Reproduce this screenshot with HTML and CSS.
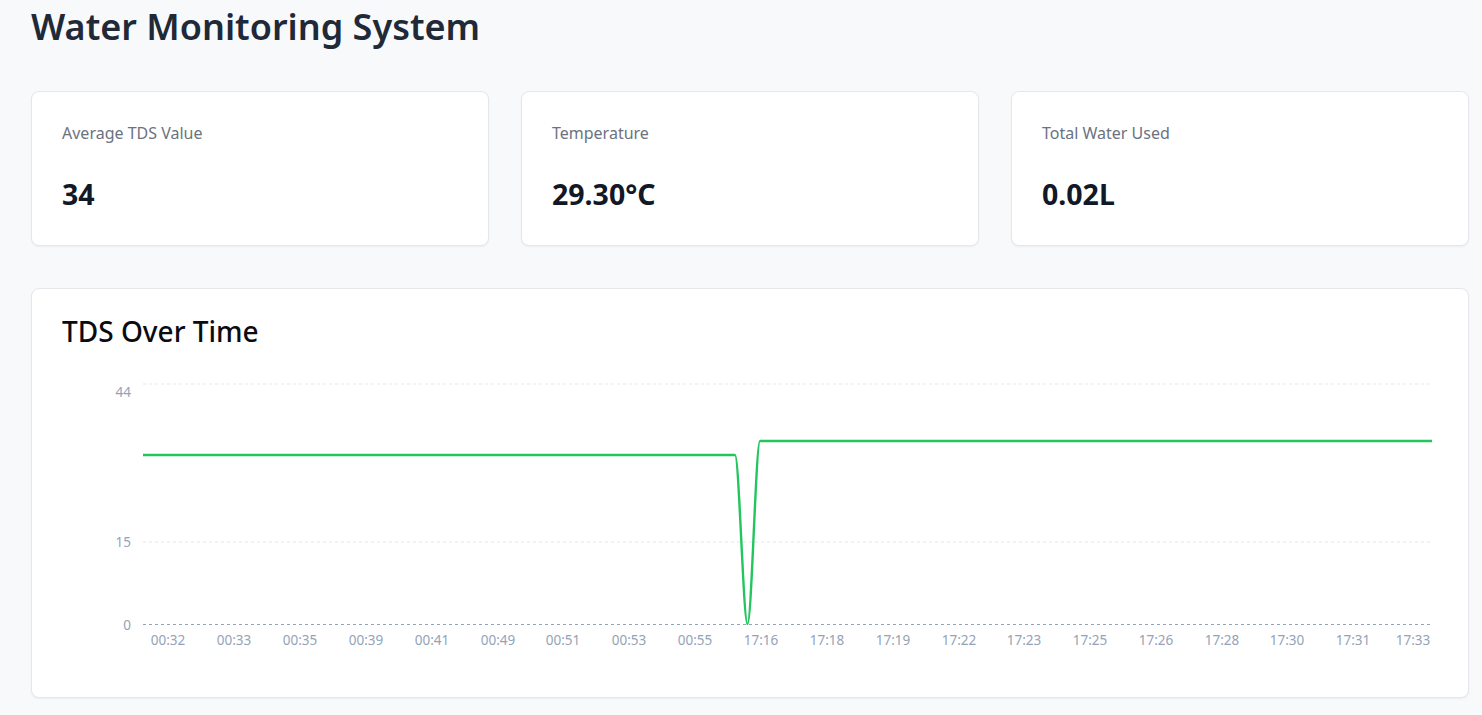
FILE: index.html
```html
<!DOCTYPE html>
<html lang="en">
<head>
<meta charset="utf-8">
<title>Water Monitoring System</title>
<link rel="stylesheet" href="styles.css">
</head>
<body>
<main class="page">
  <h1 class="page-title">Water Monitoring System</h1>
  <section class="stats">
    <div class="card stat">
      <div class="stat-label">Average TDS Value</div>
      <div class="stat-value">34</div>
    </div>
    <div class="card stat">
      <div class="stat-label">Temperature</div>
      <div class="stat-value">29.30°C</div>
    </div>
    <div class="card stat">
      <div class="stat-label">Total Water Used</div>
      <div class="stat-value">0.02L</div>
    </div>
  </section>
  <section class="card chart-card">
    <h2 class="chart-title">TDS Over Time</h2>
    <svg class="chart" width="1376" height="310" viewBox="0 0 1376 310">
      <g class="grid">
        <line x1="81" y1="25" x2="1368" y2="25"/>
        <line x1="81" y1="183" x2="1368" y2="183"/>
      </g>
      <line class="axis" x1="81" y1="265.5" x2="1370" y2="265.5"/>
      <g class="ylabels">
        <text x="69" y="34">44</text>
        <text x="69" y="184">15</text>
        <text x="69" y="267">0</text>
      </g>
      <g class="xlabels">
        <text x="106" y="282">00:32</text>
        <text x="172" y="282">00:33</text>
        <text x="238" y="282">00:35</text>
        <text x="304" y="282">00:39</text>
        <text x="370" y="282">00:41</text>
        <text x="436" y="282">00:49</text>
        <text x="501" y="282">00:51</text>
        <text x="567" y="282">00:53</text>
        <text x="633" y="282">00:55</text>
        <text x="699" y="282">17:16</text>
        <text x="765" y="282">17:18</text>
        <text x="831" y="282">17:19</text>
        <text x="897" y="282">17:22</text>
        <text x="962" y="282">17:23</text>
        <text x="1028" y="282">17:25</text>
        <text x="1094" y="282">17:26</text>
        <text x="1160" y="282">17:28</text>
        <text x="1225" y="282">17:30</text>
        <text x="1291" y="282">17:31</text>
        <text x="1351" y="282">17:33</text>
      </g>
      <path class="series" d="M81 96 H673 C677.2 96 681.3 265 685.5 265 C689.7 265 693.8 82 698 82 H1370"/>
    </svg>
  </section>
</main>
</body>
</html>
```

FILE: styles.css
```css
html, body {
  margin: 0;
  padding: 0;
  background: #f8f9fb;
}

body {
  font-family: "Noto Sans", "Open Sans", sans-serif;
  color: #1f2937;
}

.page {
  padding: 7px 13px 16px 31px;
}

.page-title {
  margin: 0 0 44px;
  font-size: 36px;
  line-height: 40px;
  font-weight: 600;
  color: #1f2937;
}

.stats {
  display: grid;
  grid-template-columns: repeat(3, 1fr);
  gap: 32px;
  margin-bottom: 42px;
}

.card {
  background: #ffffff;
  border: 1px solid #e5e7eb;
  border-radius: 8px;
  box-shadow: 0 1px 2px rgba(15, 23, 42, 0.05);
}

.stat {
  padding: 29px 30px 30px;
  height: 155px;
  box-sizing: border-box;
}

.stat-label {
  font-size: 16px;
  line-height: 24px;
  color: #6b7280;
  margin-bottom: 31px;
}

.stat-value {
  font-size: 28.5px;
  line-height: 36px;
  font-weight: 700;
  color: #111827;
}

.chart-card {
  padding: 24px 30px 28px;
  height: 410px;
  box-sizing: border-box;
}

.chart-title {
  margin: 0 0 10px;
  font-size: 28px;
  line-height: 36px;
  font-weight: 500;
  color: #0b0b12;
}

.chart {
  display: block;
}

.grid line {
  stroke: #e5e7eb;
  stroke-width: 1;
  stroke-dasharray: 3 3;
}

.axis {
  stroke: #94a3b8;
  stroke-width: 1;
  stroke-dasharray: 3 3;
}

.ylabels text {
  font-size: 13.5px;
  fill: #94a3b8;
  text-anchor: end;
  dominant-baseline: middle;
}

.xlabels text {
  font-size: 13.5px;
  fill: #94a3b8;
  text-anchor: middle;
  dominant-baseline: middle;
}

.series {
  fill: none;
  stroke: #22c55e;
  stroke-width: 2.4;
}
```
